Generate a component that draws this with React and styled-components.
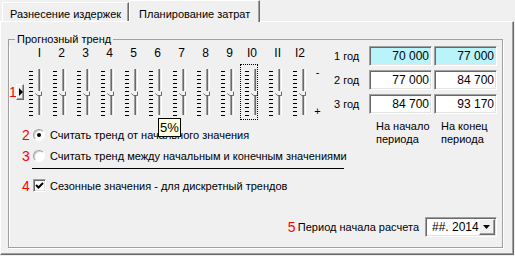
import React from 'react';
import styled, { createGlobalStyle } from 'styled-components';

const Global = createGlobalStyle`
  html, body { margin: 0; padding: 0; background: #f0f0f0; }
  body { font-family: "Liberation Sans", Arial, sans-serif; font-size: 11px; color: #000; }
  * { box-sizing: border-box; }
`;

const Window = styled.div`
  width: 515px;
  height: 256px;
  background: #f0f0f0;
  overflow: hidden;
`;

const TabStrip = styled.div`
  display: flex;
  align-items: flex-end;
  height: 21px;
  padding-left: 2px;
  position: relative;
  z-index: 1;
`;

const Tab = styled.div`
  height: ${p => (p.$active ? 22 : 19)}px;
  margin-bottom: ${p => (p.$active ? -1 : 0)}px;
  padding: ${p => (p.$active ? '7px 9px 0' : '5px 7px 0')};
  line-height: 13px;
  white-space: nowrap;
  background: #f0f0f0;
  border-top: 1px solid #fff;
  border-left: 1px solid #fff;
  border-right: 1px solid #696969;
  box-shadow: inset -1px 0 0 #a0a0a0;
`;

const Panel = styled.div`
  width: 514px;
  height: 234px;
  border-top: 1px solid #fff;
  border-left: 1px solid #fff;
  border-right: 1px solid #696969;
  border-bottom: 1px solid #696969;
  box-shadow: inset -1px -1px 0 #a0a0a0;
  padding: 11px 0 0 7px;
`;

const Group = styled.fieldset`
  margin: 0;
  padding: 0;
  width: 495px;
  min-width: 0;
  border: 1px solid #a0a0a0;
  box-shadow: 1px 1px 0 #fff;
`;

const Legend = styled.legend`
  margin-left: 6px;
  padding: 0 2px;
  line-height: 13px;
  font-size: 11px;
`;

const Body = styled.div`
  position: relative;
  height: 201px;
  display: flex;
  flex-direction: column;
  box-shadow: inset 1px 0 0 #fff;
`;

const Upper = styled.div`
  display: grid;
  grid-template-columns: 325px auto;
  grid-template-rows: auto auto;
`;

const TrendArea = styled.div`
  grid-column: 1;
  grid-row: 1;
  display: flex;
  align-items: flex-end;
  height: 74px;
`;

const Marker = styled.div`
  display: flex;
  align-items: center;
  height: 56px;
  width: 15px;
`;

const RedNum = styled.span`
  display: inline-block;
  width: ${p => p.$w || 9}px;
  color: #ff0000;
  font-size: 14px;
  line-height: 14px;
  flex: none;
`;

const StepButton = styled.div`
  width: 8px;
  height: 16px;
  flex: none;
  display: flex;
  align-items: center;
  justify-content: center;
  border-top: 1px solid #fff;
  border-left: 1px solid #fff;
  border-right: 1px solid #696969;
  border-bottom: 1px solid #696969;
  box-shadow: inset -1px -1px 0 #a0a0a0;
  &::after {
    content: '';
    display: block;
    margin-left: 1px;
    border-left: 4px solid #000;
    border-top: 4px solid transparent;
    border-bottom: 4px solid transparent;
  }
`;

const SliderRow = styled.div`
  display: flex;
  gap: 6px;
`;

const SliderColumn = styled.div`
  display: flex;
  flex-direction: column;
  width: 18px;
`;

const NumberLabel = styled.div`
  text-align: right;
  padding-right: 1px;
  font-size: 12px;
  line-height: 14px;
  margin-bottom: 4px;
`;

const TrackControl = styled.div`
  width: 18px;
  height: 56px;
  outline: ${p => (p.$focused ? '1px dotted #000' : 'none')};
  outline-offset: -1px;
  svg { display: block; }
`;

const RangeLabels = styled.div`
  height: 56px;
  width: 7px;
  margin-left: 8px;
  display: flex;
  flex-direction: column;
  justify-content: space-between;
  align-items: center;
  padding: 1px 0 2px;
  line-height: 14px;
`;

const Options = styled.div`
  grid-column: 1;
  grid-row: 2;
  padding-top: 4px;
  white-space: nowrap;
`;

const OptionRow = styled.div`
  display: flex;
  align-items: center;
  height: 21px;
  padding-left: 13px;
`;

const Slot = styled.span`
  width: 14px;
  margin-left: 1px;
  display: flex;
  justify-content: center;
  flex: none;
`;

const OptionText = styled.span`
  margin-left: 4px;
  line-height: 14px;
`;

const Radio = styled.span`
  width: 12px;
  height: 12px;
  border-radius: 50%;
  background: #fff;
  border: 1px solid;
  border-color: #a0a0a0 #fff #fff #a0a0a0;
  box-shadow: inset 1px 1px 0 #d0d0d0;
  display: flex;
  align-items: center;
  justify-content: center;
  &::after {
    content: '';
    width: 4px;
    height: 4px;
    border-radius: 50%;
    background: ${p => (p.$checked ? '#000' : 'transparent')};
  }
`;

const Checkbox = styled.span`
  width: 13px;
  height: 13px;
  background: #fff;
  border: 1px solid;
  border-color: #a0a0a0 #fff #fff #a0a0a0;
  box-shadow: inset 1px 1px 0 #696969, inset -1px -1px 0 #e3e3e3;
  display: flex;
  align-items: center;
  justify-content: center;
  svg { display: block; }
`;

const Divider = styled.div`
  height: 1px;
  width: 312px;
  background: #000;
  margin: 2px 0 6px 23px;
`;

const YearTable = styled.div`
  grid-column: 2;
  grid-row: 1 / 3;
  display: grid;
  grid-template-columns: 33px 63px 63px;
  column-gap: 2px;
  row-gap: 4px;
  align-content: start;
`;

const YearLabel = styled.div`
  line-height: 20px;
  white-space: nowrap;
`;

const ValueBox = styled.div`
  height: 20px;
  background: ${p => (p.$highlight ? '#b8f4fa' : '#fff')};
  border: 1px solid;
  border-color: #a0a0a0 #fff #fff #a0a0a0;
  box-shadow: inset 1px 1px 0 #696969, inset -1px -1px 0 #e3e3e3;
  text-align: right;
  padding-right: 2px;
  font-size: 12px;
  line-height: 18px;
`;

const HeaderCell = styled.div`
  grid-column: ${p => p.$col};
  margin-top: 2px;
  padding-left: 7px;
  line-height: 13px;
`;

const Tooltip = styled.div`
  position: absolute;
  left: 149px;
  top: 72px;
  height: 19px;
  padding: 0 1px;
  background: #ffffe1;
  border: 1px solid #000;
  font-size: 13px;
  line-height: 17px;
`;

const Footer = styled.div`
  margin-top: auto;
  display: flex;
  justify-content: flex-end;
  align-items: center;
  padding: 0 5px 10px 0;
  white-space: nowrap;
`;

const FooterText = styled.span`
  margin-left: 2px;
  margin-right: 6px;
  line-height: 14px;
`;

const Select = styled.div`
  width: 72px;
  height: 20px;
  display: flex;
  align-items: stretch;
  background: #fff;
  border: 1px solid;
  border-color: #a0a0a0 #fff #fff #a0a0a0;
  box-shadow: inset 1px 1px 0 #696969, inset -1px -1px 0 #e3e3e3;
  padding: 1px;
`;

const SelectValue = styled.span`
  flex: 1;
  padding-left: 5px;
  font-size: 12px;
  line-height: 16px;
`;

const DropButton = styled.span`
  width: 17px;
  background: #f0f0f0;
  border-top: 1px solid #fff;
  border-left: 1px solid #fff;
  border-right: 1px solid #696969;
  border-bottom: 1px solid #696969;
  box-shadow: inset -1px -1px 0 #a0a0a0;
  display: flex;
  align-items: center;
  justify-content: center;
  svg { display: block; }
`;

const ticks = Array.from({ length: 12 }, (_, k) => 7 + k * 4);

function TrackBar({ focused }) {
  return (
    <TrackControl $focused={focused}>
      <svg width="18" height="56" viewBox="0 0 18 56" shapeRendering="crispEdges">
        {ticks.map(y => (
          <rect key={y} x="5" y={y} width="4" height="1" fill="#000" />
        ))}
        <rect x="14" y="5" width="1" height="46" fill="#a0a0a0" />
        <rect x="15" y="5" width="1" height="46" fill="#696969" />
        <rect x="16" y="5" width="1" height="46" fill="#e3e3e3" />
        <rect x="17" y="5" width="1" height="46" fill="#ffffff" />
        <polygon points="11,29 13,27 18,27 18,32 13,32" fill="#f0f0f0" shapeRendering="auto" />
        <polyline points="11.5,29.5 13.5,27.5 17.5,27.5" fill="none" stroke="#ffffff" strokeWidth="1" shapeRendering="auto" />
        <polyline points="11.5,29.5 13.5,31.5 17.5,31.5 17.5,27.5" fill="none" stroke="#696969" strokeWidth="1" shapeRendering="auto" />
      </svg>
    </TrackControl>
  );
}

const months = ['I', '2', '3', '4', '5', '6', '7', '8', '9', 'I0', 'II', 'I2'];

const years = [
  { label: '1 год', start: '70 000', end: '77 000', highlight: true },
  { label: '2 год', start: '77 000', end: '84 700' },
  { label: '3 год', start: '84 700', end: '93 170' },
];

export default function App() {
  return (
    <>
      <Global />
      <Window>
        <TabStrip>
          <Tab>Разнесение издержек</Tab>
          <Tab $active>Планирование затрат</Tab>
        </TabStrip>
        <Panel>
          <Group>
            <Legend>Прогнозный тренд</Legend>
            <Body>
              <Upper>
                <TrendArea>
                  <Marker>
                    <RedNum $w={7}>1</RedNum>
                    <StepButton />
                  </Marker>
                  <SliderRow>
                    {months.map((m, i) => (
                      <SliderColumn key={m}>
                        <NumberLabel>{m}</NumberLabel>
                        <TrackBar focused={i === 9} />
                      </SliderColumn>
                    ))}
                  </SliderRow>
                  <RangeLabels>
                    <span>-</span>
                    <span>+</span>
                  </RangeLabels>
                </TrendArea>
                <Options>
                  <OptionRow>
                    <RedNum>2</RedNum>
                    <Slot><Radio $checked /></Slot>
                    <OptionText>Считать тренд от начального значения</OptionText>
                  </OptionRow>
                  <OptionRow>
                    <RedNum>3</RedNum>
                    <Slot><Radio /></Slot>
                    <OptionText>Считать тренд между начальным и конечным значениями</OptionText>
                  </OptionRow>
                  <Divider />
                  <OptionRow>
                    <RedNum>4</RedNum>
                    <Slot>
                      <Checkbox>
                        <svg width="9" height="9" viewBox="0 0 9 9">
                          <polyline points="1,4 3.5,6.5 8,2" fill="none" stroke="#000" strokeWidth="2" />
                        </svg>
                      </Checkbox>
                    </Slot>
                    <OptionText>Сезонные значения - для дискретный трендов</OptionText>
                  </OptionRow>
                </Options>
                <YearTable>
                  {years.map(y => (
                    <React.Fragment key={y.label}>
                      <YearLabel>{y.label}</YearLabel>
                      <ValueBox $highlight={y.highlight}>{y.start}</ValueBox>
                      <ValueBox $highlight={y.highlight}>{y.end}</ValueBox>
                    </React.Fragment>
                  ))}
                  <HeaderCell $col={2}>На начало<br />периода</HeaderCell>
                  <HeaderCell $col={3}>На конец<br />периода</HeaderCell>
                </YearTable>
              </Upper>
              <Tooltip>5%</Tooltip>
              <Footer>
                <RedNum $w={8}>5</RedNum>
                <FooterText>Период начала расчета</FooterText>
                <Select>
                  <SelectValue>##. 2014</SelectValue>
                  <DropButton>
                    <svg width="7" height="4" viewBox="0 0 7 4">
                      <polygon points="0,0 7,0 3.5,4" fill="#000" />
                    </svg>
                  </DropButton>
                </Select>
              </Footer>
            </Body>
          </Group>
        </Panel>
      </Window>
    </>
  );
}
